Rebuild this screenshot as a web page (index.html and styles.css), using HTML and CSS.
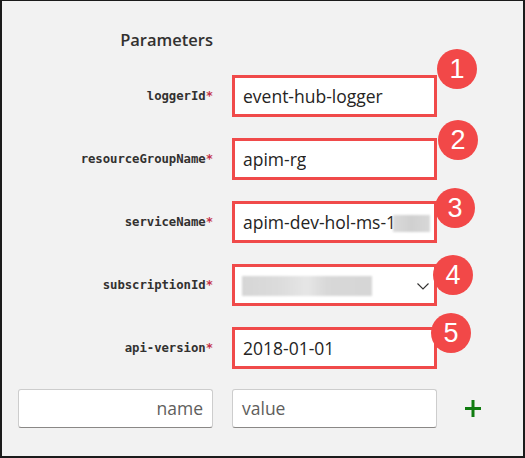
FILE: index.html
```html
<!DOCTYPE html>
<html lang="en">
<head>
<meta charset="utf-8">
<title>Parameters</title>
<link rel="stylesheet" href="styles.css">
</head>
<body>
<div class="frame">
  <div class="form">
    <div class="row head-row">
      <div class="heading">Parameters</div>
    </div>
    <div class="row">
      <div class="label">loggerId<span class="req">*</span></div>
      <div class="field"><span class="text">event-hub-logger</span><span class="badge b1">1</span></div>
    </div>
    <div class="row">
      <div class="label">resourceGroupName<span class="req">*</span></div>
      <div class="field"><span class="text">apim-rg</span><span class="badge b2">2</span></div>
    </div>
    <div class="row">
      <div class="label">serviceName<span class="req">*</span></div>
      <div class="field"><span class="text">apim-dev-hol-ms-1</span><span class="blur blur-id"></span><span class="badge b3">3</span></div>
    </div>
    <div class="row">
      <div class="label">subscriptionId<span class="req">*</span></div>
      <div class="field select"><span class="blur blur-sub"></span><svg class="chevron" width="12" height="7" viewBox="0 0 12 7"><polyline points="0.5,0.5 6,6 11.5,0.5" fill="none" stroke="#323130" stroke-width="1.1"/></svg><span class="badge b4">4</span></div>
    </div>
    <div class="row">
      <div class="label">api-version<span class="req">*</span></div>
      <div class="field"><span class="text">2018-01-01</span><span class="badge b5">5</span></div>
    </div>
    <div class="row add-row">
      <div class="input name">name</div>
      <div class="input value">value</div>
      <svg class="plus" width="16" height="17" viewBox="0 0 16 17"><rect x="6.5" y="0" width="3" height="17" fill="#107c10"/><rect x="0" y="7" width="16" height="3" fill="#107c10"/></svg>
    </div>
  </div>
</div>
</body>
</html>
```

FILE: styles.css
```css
* {
  box-sizing: border-box;
}

html, body {
  margin: 0;
  padding: 0;
  background: #f2f2f2;
}

.frame {
  width: 525px;
  height: 458px;
  background: #f2f2f2;
  border: 2px solid #1b1b1b;
  border-top-width: 1px;
  padding-top: 28px;
  font-family: "Open Sans", "Noto Sans", sans-serif;
  color: #323130;
}

.form {
  display: flex;
  flex-direction: column;
  gap: 21px;
}

.row {
  display: grid;
  grid-template-columns: 211px 205px;
  column-gap: 19px;
  align-items: center;
}

.head-row {
  margin-bottom: 3px;
}

.heading {
  text-align: right;
  font-size: 16.5px;
  line-height: 22px;
  font-weight: 600;
  color: #323130;
}

.label {
  text-align: right;
  font-family: "DejaVu Sans Mono", "Liberation Mono", monospace;
  font-weight: bold;
  font-size: 12.3px;
  color: #323130;
  letter-spacing: -0.05px;
}

.req {
  color: #c4314b;
}

.field {
  position: relative;
  height: 42px;
  border: 3px solid #f04a4a;
  background: #ffffff;
  padding: 0 8px;
  display: flex;
  align-items: center;
}

.text {
  font-size: 17.5px;
  color: #252423;
  white-space: nowrap;
  overflow: hidden;
}

.blur {
  position: absolute;
  background: #d6d6d6;
  filter: blur(0.8px);
}

.blur-id {
  left: 158px;
  top: 11px;
  width: 37px;
  height: 17px;
  background: linear-gradient(90deg, #dadada, #d0d0d0 50%, #d8d8d8);
}

.blur-sub {
  left: 7px;
  top: 9px;
  width: 130px;
  height: 20px;
  background: linear-gradient(90deg, #d6d6d6 0%, #dcdcdc 30%, #e6e6e6 50%, #d8d8d8 65%, #d6d6d6 100%);
}

.chevron {
  position: absolute;
  left: 182px;
  top: 16px;
}

.badge {
  position: absolute;
  width: 40px;
  height: 40px;
  border-radius: 50%;
  background: #f24848;
  color: #ffffff;
  font-family: "Liberation Sans", Arial, sans-serif;
  font-size: 27px;
  line-height: 40px;
  text-align: center;
}

.b1 { left: 202px; top: -29px; }
.b2 { left: 203px; top: -21px; }
.b3 { left: 200px; top: -16px; }
.b4 { left: 198px; top: -12px; }
.b5 { left: 196px; top: -17px; }

.add-row {
  grid-template-columns: 211px 205px auto;
  margin-top: -1px;
}

.input {
  height: 39px;
  background: #ffffff;
  border: 1px solid #cdcdcd;
  border-bottom-color: #8a8886;
  border-radius: 3px;
  font-size: 17.5px;
  line-height: 37px;
  color: #605e5c;
  padding: 0 9px;
}

.input.name {
  margin-left: 16px;
  text-align: right;
}

.plus {
  margin-left: 9px;
}
```
